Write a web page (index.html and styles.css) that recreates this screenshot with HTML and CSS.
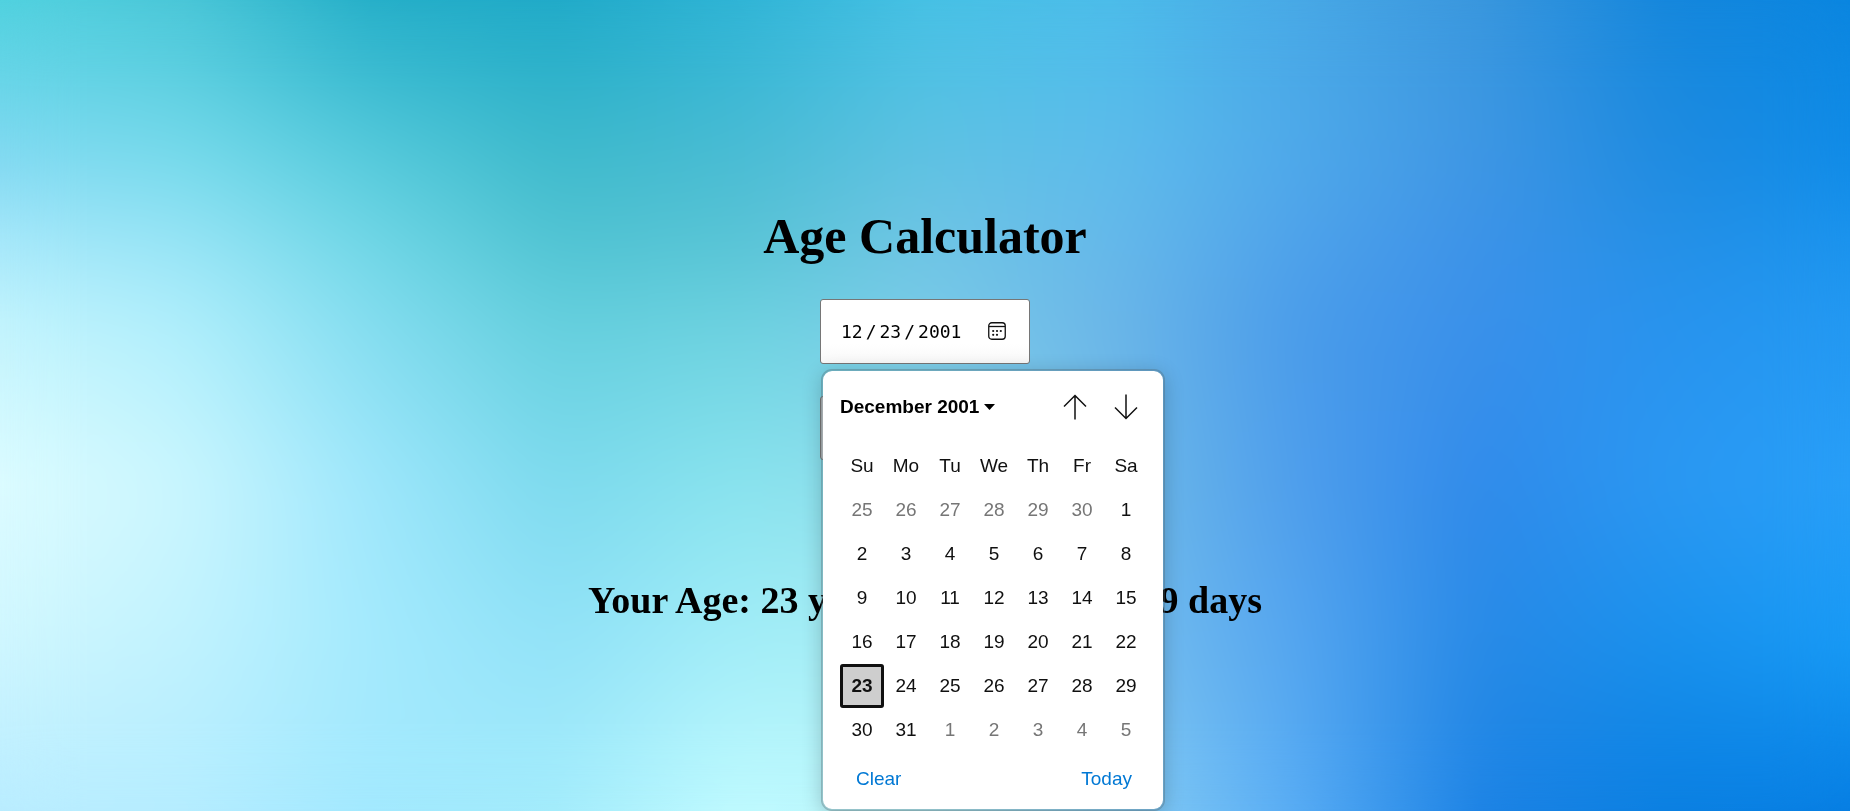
FILE: index.html
```html
<!DOCTYPE html>
<html lang="en">
<head>
<meta charset="utf-8">
<meta name="viewport" content="width=device-width, initial-scale=1">
<title>Age Calculator</title>
<link rel="stylesheet" href="styles.css">
</head>
<body>
<div class="backdrop" aria-hidden="true">
  <div class="band band-1"></div>
  <div class="band band-2"></div>
  <div class="band band-3"></div>
  <div class="band band-4"></div>
  <div class="band band-5"></div>
  <div class="band band-6"></div>
  <div class="band band-7"></div>
  <div class="band smooth"></div>
</div>
<main class="page">
  <h1 class="title">Age Calculator</h1>
  <form class="form">
    <div class="date-field">
      <input class="date-input" type="date" value="2001-12-23" aria-label="Date of birth">
      <svg class="date-icon" viewBox="0 0 18 18" aria-hidden="true">
        <rect x="0.75" y="0.75" width="16.5" height="16.5" rx="3" fill="none" stroke="#111" stroke-width="1.3"/>
        <path d="M1 4.5H17" stroke="#111" stroke-width="1.3"/>
        <g fill="#111"><circle cx="5.2" cy="9" r="1.1"/><circle cx="9" cy="9" r="1.1"/><circle cx="12.8" cy="9" r="1.1"/><circle cx="5.2" cy="12.8" r="1.1"/><circle cx="9" cy="12.8" r="1.1"/></g>
      </svg>
      <section class="picker" aria-label="Choose date">
        <header class="picker-head">
          <button class="month" type="button">December 2001
            <svg class="caret" viewBox="0 0 11 6" aria-hidden="true"><path d="M0 0H11L5.5 6Z" fill="#000"/></svg>
          </button>
          <button class="step" type="button" aria-label="Previous month">
            <svg class="arrow" viewBox="0 0 24 26" aria-hidden="true"><path d="M12 25.5V1.5M1 12.5L12 1.5L23 12.5" fill="none" stroke="#111" stroke-width="1.5"/></svg>
          </button>
          <button class="step" type="button" aria-label="Next month">
            <svg class="arrow" viewBox="0 0 24 26" aria-hidden="true"><path d="M12 .5V24.5M1 13.5L12 24.5L23 13.5" fill="none" stroke="#111" stroke-width="1.5"/></svg>
          </button>
        </header>
        <table class="days">
          <thead><tr><th>Su</th><th>Mo</th><th>Tu</th><th>We</th><th>Th</th><th>Fr</th><th>Sa</th></tr></thead>
          <tbody>
            <tr><td class="other">25</td><td class="other">26</td><td class="other">27</td><td class="other">28</td><td class="other">29</td><td class="other">30</td><td>1</td></tr>
            <tr><td>2</td><td>3</td><td>4</td><td>5</td><td>6</td><td>7</td><td>8</td></tr>
            <tr><td>9</td><td>10</td><td>11</td><td>12</td><td>13</td><td>14</td><td>15</td></tr>
            <tr><td>16</td><td>17</td><td>18</td><td>19</td><td>20</td><td>21</td><td>22</td></tr>
            <tr><td class="selected" aria-selected="true">23</td><td>24</td><td>25</td><td>26</td><td>27</td><td>28</td><td>29</td></tr>
            <tr><td>30</td><td>31</td><td class="other">1</td><td class="other">2</td><td class="other">3</td><td class="other">4</td><td class="other">5</td></tr>
          </tbody>
        </table>
        <footer class="picker-foot">
          <button class="link" type="button">Clear</button>
          <button class="link" type="button">Today</button>
        </footer>
      </section>
    </div>
    <button class="submit" type="button">Calculate Age</button>
  </form>
  <h2 class="result">Your Age: 23 years, 11 months and 9 days</h2>
</main>
</body>
</html>
```
FILE: styles.css
```css
* {
  box-sizing: border-box;
}

body {
  margin: 0;
  font-family: "Liberation Serif", "Times New Roman", serif;
  font-size: 25px;
  color: #000;
}

/* Colour mesh: each band fades in over the one before it */
.backdrop {
  position: fixed;
  inset: 0;
  z-index: -1;
}

.band {
  position: absolute;
  inset: 0;
}

.band-1 {
  background: linear-gradient(90deg, #4fd2df, #47c5d6, #22adc7, #1ea9c8, #2eb4d6, #45c1e5, #4bbdea, #48a9e6, #3a97dd, #1587dc, #0a86e0);
}

.band-2 {
  background: linear-gradient(90deg, #84d9f2, #78dbec, #58cbdc, #3fbacb, #4bbcd3, #60c2e2, #5fbceb, #4fa9ea, #3f96e4, #1f8be0, #108ce8);
  mask-image: linear-gradient(transparent 0%, #000 20%);
}

.band-3 {
  background: linear-gradient(90deg, #a8e8fa, #98e4f6, #70d7e6, #50c3d2, #58c4d5, #70c5e5, #65b9ea, #4fa2ea, #3c92e8, #2590e6, #1b94ee);
  mask-image: linear-gradient(transparent 20%, #000 30%);
}

.band-4 {
  background: linear-gradient(90deg, #c4f4fd, #b0effc, #84ddf0, #64cfdd, #6dd2e0, #7acbe8, #6cb6e8, #4a9cea, #3a90ea, #2893ee, #2399f2);
  mask-image: linear-gradient(transparent 30%, #000 40%);
}

.band-5 {
  background: linear-gradient(90deg, #defcff, #cbf6fe, #9fe7fc, #7ddaee, #8ae4ee, #8fdceb, #70bce8, #4f9eec, #308aea, #2b98f2, #289ff8);
  mask-image: linear-gradient(transparent 40%, #000 60%);
}

.band-6 {
  background: linear-gradient(90deg, #cff6fe, #c0f2fe, #a4eafd, #92e2f8, #a4eef8, #a8eef4, #78c0ee, #55a6f0, #2789e6, #1890ec, #179af5);
  mask-image: linear-gradient(transparent 60%, #000 80%);
}

.band-7 {
  background: linear-gradient(90deg, #b8ecff, #b4ecff, #a2e8fe, #a4ecfb, #c2fbff, #b8f4fa, #8ad0f4, #58acf4, #1c82e4, #0a7ee0, #067de2);
  mask-image: linear-gradient(transparent 80%, #000 100%);
}

.smooth {
  backdrop-filter: blur(36px);
}

.page {
  display: flex;
  flex-direction: column;
  align-items: center;
  min-height: 100vh;
  padding-top: 208px;
}

.title {
  margin: 0 0 34px;
  font-size: 50px;
  line-height: 57px;
}

.form {
  display: flex;
  flex-direction: column;
  align-items: flex-start;
  gap: 32px;
}

.date-field {
  position: relative;
}

.date-input {
  display: block;
  width: 210px;
  height: 65px;
  padding: 0 20px 0 19px;
  border: 1px solid #767676;
  border-radius: 3px;
  background: linear-gradient(#fff 70%, #f8f8f8);
  color: #000;
  font-family: "DejaVu Sans Mono", monospace;
  font-size: 18px;
}

.date-input::-webkit-datetime-edit-text {
  padding: 0 2px;
}

.date-input::-webkit-calendar-picker-indicator {
  opacity: 0;
}

.date-icon {
  position: absolute;
  top: 23px;
  right: 24px;
  width: 18px;
  height: 18px;
  pointer-events: none;
}

.submit {
  width: 210px;
  height: 64px;
  border: 1px solid #767676;
  border-radius: 3px;
  background: #d0d0d0;
  font: inherit;
}

.result {
  margin: 119px 0 0;
  font-size: 38px;
  line-height: 43px;
}

.picker {
  position: absolute;
  top: 70px;
  left: 1px;
  z-index: 1;
  width: 344px;
  padding: 18px 15px 16px 17px;
  border: 2px solid rgba(80, 100, 110, 0.35);
  border-radius: 11px;
  background: #fff;
  background-clip: padding-box;
  box-shadow: 0 4px 20px rgba(0, 0, 0, 0.2);
  font-family: "Liberation Sans", Arial, sans-serif;
  font-size: 19px;
}

.picker button {
  padding: 0;
  border: 0;
  background: none;
  font: inherit;
}

.picker-head {
  display: flex;
  align-items: center;
  gap: 7px;
  height: 36px;
}

.picker .month {
  display: flex;
  align-items: center;
  gap: 5px;
  margin-right: auto;
  color: #000;
  font-weight: bold;
}

.caret {
  width: 11px;
  height: 6px;
}

.step {
  display: flex;
  justify-content: center;
  width: 44px;
}

.arrow {
  width: 24px;
  height: 26px;
}

.days {
  width: 308px;
  margin-top: 19px;
  border-collapse: collapse;
  table-layout: fixed;
  text-align: center;
}

.days th,
.days td {
  height: 44px;
  padding: 0;
  color: #101010;
  font-weight: normal;
}

.days td.other {
  color: #767676;
}

.days td.selected {
  border-radius: 3px;
  background: #cecece;
  box-shadow: inset 0 0 0 3px #101010;
  font-weight: bold;
}

.picker-foot {
  display: flex;
  justify-content: space-between;
  padding: 16px 16px 3px;
}

.picker .link {
  color: #0078d4;
  line-height: 22px;
}
```
